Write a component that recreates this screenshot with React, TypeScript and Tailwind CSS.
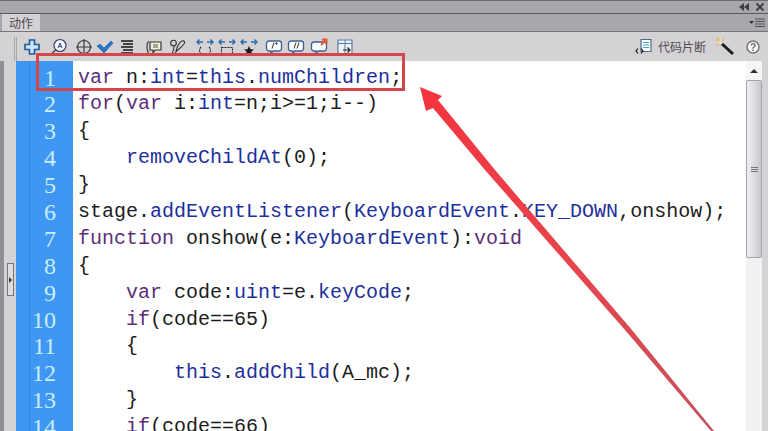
import React from 'react';

type Tok = [string, 'k' | 'b' | 'd'];

// k = keyword (purple), b = identifier (blue), d = default (black)
const lines: Tok[][] = [
  [['var', 'k'], [' n:', 'd'], ['int', 'b'], ['=', 'd'], ['this', 'b'], ['.', 'd'], ['numChildren', 'b'], [';', 'd']],
  [['for', 'k'], ['(', 'd'], ['var', 'k'], [' i:', 'd'], ['int', 'b'], ['=n;i>=1;i--)', 'd']],
  [['{', 'd']],
  [['    ', 'd'], ['removeChildAt', 'b'], ['(0);', 'd']],
  [['}', 'd']],
  [['stage.', 'd'], ['addEventListener', 'b'], ['(', 'd'], ['KeyboardEvent', 'b'], ['.', 'd'], ['KEY_DOWN', 'b'], [',onshow);', 'd']],
  [['function', 'k'], [' onshow(e:', 'd'], ['KeyboardEvent', 'b'], ['):', 'd'], ['void', 'k']],
  [['{', 'd']],
  [['    ', 'd'], ['var', 'k'], [' code:', 'd'], ['uint', 'b'], ['=e.', 'd'], ['keyCode', 'b'], [';', 'd']],
  [['    ', 'd'], ['if', 'k'], ['(code==65)', 'd']],
  [['    {', 'd']],
  [['        ', 'd'], ['this', 'b'], ['.', 'd'], ['addChild', 'b'], ['(A_mc);', 'd']],
  [['    }', 'd']],
  [['    ', 'd'], ['if', 'k'], ['(code==66)', 'd']],
];

const tokClass = { k: 'text-[#5a2f78]', b: 'text-[#1d2f9c]', d: 'text-[#1c1c1c]' };

const Icon = ({ className, children }: { className: string; children: React.ReactNode }) => (
  <svg width="18" height="18" viewBox="0 0 18 18" fill="none" className={className}>
    {children}
  </svg>
);

const Bubble = ({ className, children }: { className: string; children?: React.ReactNode }) => (
  <Icon className={className}>
    <path d="M4 3h10a2.500 2.500 0 0 1 2.500 2.500v5A2.500 2.500 0 0 1 14 13H8l-2 2.500V13H4a2.500 2.500 0 0 1-2.500-2.500v-5A2.500 2.500 0 0 1 4 3z" fill="#fff" stroke="#3c5f96" strokeWidth="1.300" />
    {children}
  </Icon>
);

const DebugArrows = () => (
  <path d="M1 4h6M3.500 1.500L1 4l2.500 2.500M17 4h-6M14.500 1.500L17 4l-2.500 2.500" stroke="#2d6ea8" strokeWidth="1.500" />
);

const Toolbar = () => (
  <div className="flex h-[29px] items-center bg-[#d4d2d5]">
    <div className="ml-[14px] h-[24px] w-[3px] self-end border-x border-[#a9a7aa]" />
    <Icon className="ml-[6px]">
      <path d="M6.500 2h5v4.500H16v5h-4.500v4.500h-5v-4.500H2v-5h4.500z" fill="#cfe6f8" stroke="#1f5f9f" strokeWidth="1.700" />
      <path d="M13 16.500h4" stroke="#222" strokeWidth="1.200" />
    </Icon>
    <Icon className="ml-[9px]">
      <circle cx="10" cy="7.500" r="6" fill="#f2f2f4" stroke="#33415f" strokeWidth="1.200" />
      <path d="M8 10l2-5 2 5M8.800 8.500h2.400" stroke="#33518a" strokeWidth="1" />
      <path d="M5.500 12L2 15.500" stroke="#444" strokeWidth="1.500" />
    </Icon>
    <Icon className="ml-[7px]">
      <circle cx="9" cy="9" r="6.500" stroke="#3a3a3e" strokeWidth="1.200" />
      <path d="M9 1v16M1 9h16" stroke="#3a3a3e" strokeWidth="1.200" />
    </Icon>
    <Icon className="ml-[3px]">
      <path d="M1 8l3-2 4 4 7-7 2 2-9 10z" fill="#2f75c6" stroke="#1d5aa0" strokeWidth=".6" />
    </Icon>
    <Icon className="ml-[4px]">
      <path d="M3 3h12M5 6h10M3 9h12M5 12h10M3 15h12" stroke="#151515" strokeWidth="1.300" />
    </Icon>
    <Icon className="ml-[9px]">
      <path d="M3.500 3C1.500 6 1.500 12 3.500 15" stroke="#333" strokeWidth="1.100" />
      <path d="M5 4h11v8H10l-2 3v-3H5z" fill="#f5f1d8" stroke="#333" strokeWidth="1.200" />
      <path d="M8 7h5M8 9h5" stroke="#555" />
    </Icon>
    <Icon className="ml-[6px]">
      <circle cx="4.500" cy="5" r="2.800" stroke="#333" strokeWidth="1.100" />
      <path d="M5 8c0 3-1 6-2 8M6 15C8 12 12 10 15 6c1.500-2 0-4-2-3-3 1.500-5 6-6 10" stroke="#333" strokeWidth="1.100" />
    </Icon>
    <Icon className="ml-[9px]">
      <DebugArrows />
      <path d="M5 9C3 11 3 14 5 16M13 9c2 2 2 5 0 7" stroke="#222" strokeWidth="1.100" strokeDasharray="2 1" />
    </Icon>
    <Icon className="ml-[4px]">
      <DebugArrows />
      <path d="M3.500 9.500h11v6h-11z" stroke="#222" strokeWidth="1.100" strokeDasharray="2 1" />
    </Icon>
    <Icon className="ml-[4px]">
      <DebugArrows />
      <path d="M9 8l1.500 3.200 3.500.3-2.700 2.200.9 3.300L9 15.200 5.800 17l.9-3.300L4 11.500l3.500-.3z" fill="#1a1a1a" />
    </Icon>
    <Bubble className="ml-[7px]">
      <path d="M7 10.500l2-6M10.200 5.500h2.500M11.500 4.300v2.400" stroke="#333" strokeWidth="1" />
    </Bubble>
    <Bubble className="ml-[4px]">
      <path d="M7 10.500l2-6M10 10.500l2-6" stroke="#333" strokeWidth="1" />
    </Bubble>
    <Icon className="ml-[5px]">
      <path d="M4 4h10a2.500 2.500 0 0 1 2.500 2.500v4A2.500 2.500 0 0 1 14 13H8l-2 2.500V13H4a2.500 2.500 0 0 1-2.500-2.500v-4A2.500 2.500 0 0 1 4 4z" fill="#fff" stroke="#3c5f96" strokeWidth="1.300" />
      <path d="M11 7l5.500-5.500M12 1.500l4.500 0 0 4.500" stroke="#e2592c" strokeWidth="2" />
    </Icon>
    <Icon className="ml-[8px]">
      <path d="M2 2h14v14H2z" fill="#eef3f8" stroke="#5c7ea3" strokeWidth="1.200" />
      <path d="M2 5.500h14M9 2v14" stroke="#5c7ea3" strokeWidth="1" />
      <path d="M7 12h7M11.500 9.500L14 12l-2.500 2.500" stroke="#222" strokeWidth="1.200" />
    </Icon>

    <svg width="18" height="18" viewBox="0 0 18 18" fill="none" className="ml-auto">
      <path d="M6 1.500h10v12H6z" fill="#fff" stroke="#4a6c8c" strokeWidth="1.200" />
      <path d="M8 4.500h6M8 7h6M8 9.500h6" stroke="#4aa3c9" strokeWidth="1" />
      <path d="M3 10.500l-2 2.500 2 2.500M6 10.500l2 2.500-2 2.500" stroke="#111" strokeWidth="1.200" />
    </svg>
    <span className="ml-[5px] text-[12px] leading-none text-[#4f4d52] [font-family:'Noto_Sans_CJK_SC',sans-serif]">代码片断</span>
    <svg width="20" height="20" viewBox="0 0 20 20" fill="none" className="ml-[9px]">
      <path d="M6 6l12 11" stroke="#1c1c1c" strokeWidth="3" />
      <path d="M4 4l3 3" stroke="#e9e2c0" strokeWidth="3" />
      <path d="M3 .5v4M.5 3h4M8 1v3M1 8h3" stroke="#e3b82e" strokeWidth="1" />
    </svg>
    <svg width="14" height="14" viewBox="0 0 14 14" className="ml-[11px] mr-[8px]">
      <circle cx="7" cy="7" r="6" fill="#f6f6f6" stroke="#77757a" strokeWidth="1.500" />
      <text x="7" y="10.500" textAnchor="middle" fontSize="10" fontWeight="700" fill="#6f6d72" fontFamily="Liberation Sans, sans-serif">?</text>
    </svg>
  </div>
);

export default function App() {
  return (
    <div className="relative flex h-[431px] w-[768px] flex-col overflow-hidden bg-[#d4d2d5]">
      {/* 顶部标题条 */}
      <div className="flex h-[14px] items-center justify-end gap-[6px] border-y border-t-[#6e6c70] border-b-[#59575b] bg-[#a9a7ab] pr-[3px]">
        <svg width="10" height="8" viewBox="0 0 10 8">
          <path d="M5 0v8L0 4zM10 0v8L5 4z" fill="#3f3e42" />
        </svg>
        <svg width="10" height="10" viewBox="0 0 10 10">
          <path d="M1.500 1.500l7 7M8.500 1.500l-7 7" stroke="#3a393d" strokeWidth="1.800" />
        </svg>
      </div>

      {/* 标签栏 */}
      <div className="flex h-[18px] items-stretch border-b border-[#77757a] bg-[#a9a7ab]">
        <div className="ml-[2px] flex w-[38px] items-center justify-center bg-[#d4d2d5] text-[12px] leading-none text-[#4b4a4e] [font-family:'Noto_Sans_CJK_SC',sans-serif]">
          动作
        </div>
        <svg width="16" height="10" viewBox="0 0 16 10" className="ml-auto mr-[3px] self-center">
          <path d="M0 3h5L2.500 6z" fill="#333" />
          <path d="M6 1h10M6 3.500h10M6 6h10M6 8.500h10" stroke="#555" strokeWidth="1" />
        </svg>
      </div>

      <Toolbar />

      {/* 编辑区 */}
      <div className="flex min-h-0 flex-1">
        <div className="flex w-[16px] shrink-0 items-start bg-[#d4d2d5]">
          <div className="h-full w-[4px] bg-[#918f93]" />
          <div className="ml-[3px] mt-[202px] flex h-[33px] w-[7px] items-center justify-center border border-[#77757a] bg-[#dedcdf]">
            <div className="h-0 w-0 border-y-[3px] border-l-[3px] border-y-transparent border-l-[#333]" />
          </div>
        </div>

        <div className="flex min-w-0 flex-1 bg-white">
          <div className="w-[14px] shrink-0 border-r border-[#2f86e0] bg-[#3f97f3]" />
          <div className="flex-1 overflow-hidden bg-[linear-gradient(to_right,#3f97f3_43px,#fff_43px)] pt-[3.5px] font-['Liberation_Mono',monospace] text-[20px] leading-[26.9px]">
            {lines.map((toks, i) => (
              <div key={i} className="flex h-[26.9px] whitespace-pre">
                <span className="w-[43px] shrink-0 pr-[17px] text-right font-['Liberation_Serif',serif] text-[24px] text-[#c9eeff]">
                  {i + 1}
                </span>
                <span className="pl-[5px]">
                  {toks.map(([text, kind], j) => (
                    <span key={j} className={tokClass[kind]}>
                      {text}
                    </span>
                  ))}
                </span>
              </div>
            ))}
          </div>
        </div>

        {/* 滚动条 */}
        <div className="flex w-[16px] shrink-0 flex-col items-stretch bg-[#f1f0f3]">
          <div className="flex h-[19px] items-center justify-center bg-[#f6f5f7]">
            <div className="h-0 w-0 border-x-[4px] border-b-[4px] border-x-transparent border-b-[#333]" />
          </div>
          <div className="flex h-[178px] flex-col items-center justify-center gap-[1px] rounded-[2px] border border-[#a6a4a9] bg-[linear-gradient(to_right,#f0eff2,#c9c7cc)]">
            <div className="h-px w-[7px] bg-[#77757a]" />
            <div className="h-px w-[7px] bg-[#77757a]" />
            <div className="h-px w-[7px] bg-[#77757a]" />
          </div>
        </div>
        <div className="w-[6px] shrink-0 bg-[#d4d2d5]" />
      </div>

      {/* 红色标注 */}
      <div className="absolute left-[36px] top-[53px] h-[38px] w-[369px] border-[3px] border-[#d2464c]" />
      <svg width="768" height="431" viewBox="0 0 768 431" className="pointer-events-none absolute left-0 top-0">
        <defs>
          <linearGradient id="arrowFill" x1="0" y1="87" x2="0" y2="431" gradientUnits="userSpaceOnUse">
            <stop offset="0" stopColor="#f4343f" />
            <stop offset="0.5" stopColor="#e8444c" />
            <stop offset="1" stopColor="#c4525c" />
          </linearGradient>
        </defs>
        <polygon points="420,87 442,96 438,100 495,170 632,330 714,431 711,431 625,330 485,170 433,108 426,111" fill="url(#arrowFill)" />
      </svg>
    </div>
  );
}
